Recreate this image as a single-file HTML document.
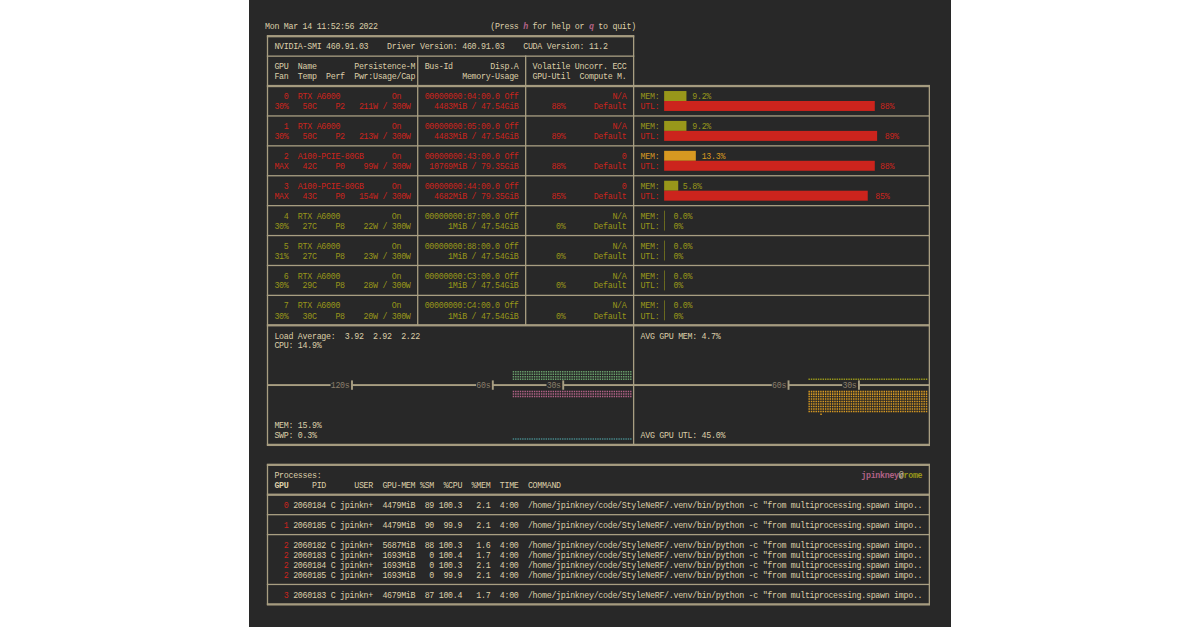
<!DOCTYPE html>
<html><head><meta charset="utf-8"><title>nvitop</title>
<style>
html,body{margin:0;padding:0;width:1200px;height:627px;overflow:hidden;background:#ffffff;}
#term{position:absolute;left:249px;top:0;width:702px;height:627px;background:#282828;}
#lines{position:absolute;left:0;top:0;width:1200px;height:627px;}
#txt{position:absolute;left:265.291px;top:22.2px;margin:0;width:1704px;
 font-family:"Liberation Mono",monospace;font-size:20.0px;line-height:21.4366px;
 color:#ddcfa8;white-space:pre;transform-origin:0 0;transform:scale(0.41464,0.46500);
 letter-spacing:-0.6792px;font-kerning:none;font-variant-ligatures:none;}
.r{color:#cc241d}.g{color:#98971a}.y{color:#d79921}.m{color:#b16286}.d{color:#8a7f6c}.c{color:#689d6a}.b{color:#458588}.B{font-weight:bold}.I{font-style:italic}</style></head>
<body>
<div id="term"></div>
<svg id="lines" width="1200" height="627" viewBox="0 0 1200 627" shape-rendering="geometricPrecision">
<rect x="266.85" y="35.05" width="367.43" height="2.30" fill="#a59b7f"/>
<rect x="266.85" y="55.49" width="367.43" height="1.30" fill="#a89e82"/>
<rect x="266.85" y="84.89" width="663.15" height="2.30" fill="#a59b7f"/>
<rect x="266.85" y="115.30" width="663.15" height="1.30" fill="#a89e82"/>
<rect x="266.85" y="145.20" width="663.15" height="1.30" fill="#a89e82"/>
<rect x="266.85" y="175.10" width="663.15" height="1.30" fill="#a89e82"/>
<rect x="266.85" y="205.01" width="663.15" height="1.30" fill="#a89e82"/>
<rect x="266.85" y="234.91" width="663.15" height="1.30" fill="#a89e82"/>
<rect x="266.85" y="264.82" width="663.15" height="1.30" fill="#a89e82"/>
<rect x="266.85" y="294.72" width="663.15" height="1.30" fill="#a89e82"/>
<rect x="266.85" y="324.12" width="663.15" height="2.30" fill="#a59b7f"/>
<rect x="266.85" y="443.74" width="663.15" height="2.30" fill="#a59b7f"/>
<rect x="266.85" y="35.55" width="1.30" height="409.99" fill="#a89e82"/>
<rect x="632.98" y="35.55" width="1.30" height="409.99" fill="#a89e82"/>
<rect x="928.70" y="85.39" width="1.30" height="360.15" fill="#a89e82"/>
<rect x="417.06" y="55.49" width="1.30" height="270.44" fill="#a89e82"/>
<rect x="525.02" y="55.49" width="1.30" height="270.44" fill="#a89e82"/>
<rect x="267.50" y="384.13" width="63.07" height="1.9" fill="#a89e82"/>
<rect x="351.99" y="384.13" width="124.09" height="1.9" fill="#a89e82"/>
<rect x="492.81" y="384.13" width="53.68" height="1.9" fill="#a89e82"/>
<rect x="563.22" y="384.13" width="70.41" height="1.9" fill="#a89e82"/>
<rect x="633.63" y="384.13" width="138.17" height="1.9" fill="#a89e82"/>
<rect x="788.53" y="384.13" width="53.68" height="1.9" fill="#a89e82"/>
<rect x="858.94" y="384.13" width="70.41" height="1.9" fill="#a89e82"/>
<rect x="351.04" y="380.40" width="1.9" height="9.37" fill="#a89e82"/>
<rect x="491.86" y="380.40" width="1.9" height="9.37" fill="#a89e82"/>
<rect x="562.27" y="380.40" width="1.9" height="9.37" fill="#a89e82"/>
<rect x="787.58" y="380.40" width="1.9" height="9.37" fill="#a89e82"/>
<rect x="857.99" y="380.40" width="1.9" height="9.37" fill="#a89e82"/>
<rect x="266.85" y="463.68" width="663.15" height="2.30" fill="#a59b7f"/>
<rect x="266.85" y="493.58" width="663.15" height="2.30" fill="#a59b7f"/>
<rect x="266.85" y="603.23" width="663.15" height="2.30" fill="#a59b7f"/>
<rect x="266.85" y="514.02" width="663.15" height="1.30" fill="#a89e82"/>
<rect x="266.85" y="533.95" width="663.15" height="1.30" fill="#a89e82"/>
<rect x="266.85" y="583.79" width="663.15" height="1.30" fill="#a89e82"/>
<rect x="266.85" y="464.18" width="1.30" height="140.85" fill="#a89e82"/>
<rect x="928.70" y="464.18" width="1.30" height="140.85" fill="#a89e82"/>
<rect x="664.14" y="91.03" width="22.30" height="9.97" fill="#98971a"/>
<rect x="664.14" y="100.99" width="210.64" height="9.97" fill="#cc241d"/>
<rect x="664.14" y="120.93" width="22.30" height="9.97" fill="#98971a"/>
<rect x="664.14" y="130.90" width="212.99" height="9.97" fill="#cc241d"/>
<rect x="664.14" y="150.83" width="31.68" height="9.97" fill="#d79921"/>
<rect x="664.14" y="160.80" width="210.64" height="9.97" fill="#cc241d"/>
<rect x="664.14" y="180.74" width="14.08" height="9.97" fill="#98971a"/>
<rect x="664.14" y="190.71" width="203.60" height="9.97" fill="#cc241d"/>
<rect x="664.14" y="210.64" width="0.59" height="9.97" fill="#98971a"/>
<rect x="664.14" y="220.61" width="0.59" height="9.97" fill="#98971a"/>
<rect x="664.14" y="240.55" width="0.59" height="9.97" fill="#98971a"/>
<rect x="664.14" y="250.51" width="0.59" height="9.97" fill="#98971a"/>
<rect x="664.14" y="270.45" width="0.59" height="9.97" fill="#98971a"/>
<rect x="664.14" y="280.42" width="0.59" height="9.97" fill="#98971a"/>
<rect x="664.14" y="300.35" width="0.59" height="9.97" fill="#98971a"/>
<rect x="664.14" y="310.32" width="0.59" height="9.97" fill="#98971a"/>
<path d="M512.73 370.93h1.45v1.5h-1.45zM512.73 373.42h1.45v1.5h-1.45zM512.73 375.91h1.45v1.5h-1.45zM512.73 378.40h1.45v1.5h-1.45zM515.08 370.93h1.45v1.5h-1.45zM515.08 373.42h1.45v1.5h-1.45zM515.08 375.91h1.45v1.5h-1.45zM515.08 378.40h1.45v1.5h-1.45zM517.43 370.93h1.45v1.5h-1.45zM517.43 373.42h1.45v1.5h-1.45zM517.43 375.91h1.45v1.5h-1.45zM517.43 378.40h1.45v1.5h-1.45zM519.77 370.93h1.45v1.5h-1.45zM519.77 373.42h1.45v1.5h-1.45zM519.77 375.91h1.45v1.5h-1.45zM519.77 378.40h1.45v1.5h-1.45zM522.12 370.93h1.45v1.5h-1.45zM522.12 373.42h1.45v1.5h-1.45zM522.12 375.91h1.45v1.5h-1.45zM522.12 378.40h1.45v1.5h-1.45zM524.47 370.93h1.45v1.5h-1.45zM524.47 373.42h1.45v1.5h-1.45zM524.47 375.91h1.45v1.5h-1.45zM524.47 378.40h1.45v1.5h-1.45zM526.82 370.93h1.45v1.5h-1.45zM526.82 373.42h1.45v1.5h-1.45zM526.82 375.91h1.45v1.5h-1.45zM526.82 378.40h1.45v1.5h-1.45zM529.16 370.93h1.45v1.5h-1.45zM529.16 373.42h1.45v1.5h-1.45zM529.16 375.91h1.45v1.5h-1.45zM529.16 378.40h1.45v1.5h-1.45zM531.51 370.93h1.45v1.5h-1.45zM531.51 373.42h1.45v1.5h-1.45zM531.51 375.91h1.45v1.5h-1.45zM531.51 378.40h1.45v1.5h-1.45zM533.86 370.93h1.45v1.5h-1.45zM533.86 373.42h1.45v1.5h-1.45zM533.86 375.91h1.45v1.5h-1.45zM533.86 378.40h1.45v1.5h-1.45zM536.20 370.93h1.45v1.5h-1.45zM536.20 373.42h1.45v1.5h-1.45zM536.20 375.91h1.45v1.5h-1.45zM536.20 378.40h1.45v1.5h-1.45zM538.55 370.93h1.45v1.5h-1.45zM538.55 373.42h1.45v1.5h-1.45zM538.55 375.91h1.45v1.5h-1.45zM538.55 378.40h1.45v1.5h-1.45zM540.90 370.93h1.45v1.5h-1.45zM540.90 373.42h1.45v1.5h-1.45zM540.90 375.91h1.45v1.5h-1.45zM540.90 378.40h1.45v1.5h-1.45zM543.24 370.93h1.45v1.5h-1.45zM543.24 373.42h1.45v1.5h-1.45zM543.24 375.91h1.45v1.5h-1.45zM543.24 378.40h1.45v1.5h-1.45zM545.59 370.93h1.45v1.5h-1.45zM545.59 373.42h1.45v1.5h-1.45zM545.59 375.91h1.45v1.5h-1.45zM545.59 378.40h1.45v1.5h-1.45zM547.94 370.93h1.45v1.5h-1.45zM547.94 373.42h1.45v1.5h-1.45zM547.94 375.91h1.45v1.5h-1.45zM547.94 378.40h1.45v1.5h-1.45zM550.29 370.93h1.45v1.5h-1.45zM550.29 373.42h1.45v1.5h-1.45zM550.29 375.91h1.45v1.5h-1.45zM550.29 378.40h1.45v1.5h-1.45zM552.63 370.93h1.45v1.5h-1.45zM552.63 373.42h1.45v1.5h-1.45zM552.63 375.91h1.45v1.5h-1.45zM552.63 378.40h1.45v1.5h-1.45zM554.98 370.93h1.45v1.5h-1.45zM554.98 373.42h1.45v1.5h-1.45zM554.98 375.91h1.45v1.5h-1.45zM554.98 378.40h1.45v1.5h-1.45zM557.33 370.93h1.45v1.5h-1.45zM557.33 373.42h1.45v1.5h-1.45zM557.33 375.91h1.45v1.5h-1.45zM557.33 378.40h1.45v1.5h-1.45zM559.67 370.93h1.45v1.5h-1.45zM559.67 373.42h1.45v1.5h-1.45zM559.67 375.91h1.45v1.5h-1.45zM559.67 378.40h1.45v1.5h-1.45zM562.02 370.93h1.45v1.5h-1.45zM562.02 373.42h1.45v1.5h-1.45zM562.02 375.91h1.45v1.5h-1.45zM562.02 378.40h1.45v1.5h-1.45zM564.37 370.93h1.45v1.5h-1.45zM564.37 373.42h1.45v1.5h-1.45zM564.37 375.91h1.45v1.5h-1.45zM564.37 378.40h1.45v1.5h-1.45zM566.71 370.93h1.45v1.5h-1.45zM566.71 373.42h1.45v1.5h-1.45zM566.71 375.91h1.45v1.5h-1.45zM566.71 378.40h1.45v1.5h-1.45zM569.06 370.93h1.45v1.5h-1.45zM569.06 373.42h1.45v1.5h-1.45zM569.06 375.91h1.45v1.5h-1.45zM569.06 378.40h1.45v1.5h-1.45zM571.41 370.93h1.45v1.5h-1.45zM571.41 373.42h1.45v1.5h-1.45zM571.41 375.91h1.45v1.5h-1.45zM571.41 378.40h1.45v1.5h-1.45zM573.76 370.93h1.45v1.5h-1.45zM573.76 373.42h1.45v1.5h-1.45zM573.76 375.91h1.45v1.5h-1.45zM573.76 378.40h1.45v1.5h-1.45zM576.10 370.93h1.45v1.5h-1.45zM576.10 373.42h1.45v1.5h-1.45zM576.10 375.91h1.45v1.5h-1.45zM576.10 378.40h1.45v1.5h-1.45zM578.45 370.93h1.45v1.5h-1.45zM578.45 373.42h1.45v1.5h-1.45zM578.45 375.91h1.45v1.5h-1.45zM578.45 378.40h1.45v1.5h-1.45zM580.80 370.93h1.45v1.5h-1.45zM580.80 373.42h1.45v1.5h-1.45zM580.80 375.91h1.45v1.5h-1.45zM580.80 378.40h1.45v1.5h-1.45zM583.14 370.93h1.45v1.5h-1.45zM583.14 373.42h1.45v1.5h-1.45zM583.14 375.91h1.45v1.5h-1.45zM583.14 378.40h1.45v1.5h-1.45zM585.49 370.93h1.45v1.5h-1.45zM585.49 373.42h1.45v1.5h-1.45zM585.49 375.91h1.45v1.5h-1.45zM585.49 378.40h1.45v1.5h-1.45zM587.84 370.93h1.45v1.5h-1.45zM587.84 373.42h1.45v1.5h-1.45zM587.84 375.91h1.45v1.5h-1.45zM587.84 378.40h1.45v1.5h-1.45zM590.18 370.93h1.45v1.5h-1.45zM590.18 373.42h1.45v1.5h-1.45zM590.18 375.91h1.45v1.5h-1.45zM590.18 378.40h1.45v1.5h-1.45zM592.53 370.93h1.45v1.5h-1.45zM592.53 373.42h1.45v1.5h-1.45zM592.53 375.91h1.45v1.5h-1.45zM592.53 378.40h1.45v1.5h-1.45zM594.88 370.93h1.45v1.5h-1.45zM594.88 373.42h1.45v1.5h-1.45zM594.88 375.91h1.45v1.5h-1.45zM594.88 378.40h1.45v1.5h-1.45zM597.23 370.93h1.45v1.5h-1.45zM597.23 373.42h1.45v1.5h-1.45zM597.23 375.91h1.45v1.5h-1.45zM597.23 378.40h1.45v1.5h-1.45zM599.57 370.93h1.45v1.5h-1.45zM599.57 373.42h1.45v1.5h-1.45zM599.57 375.91h1.45v1.5h-1.45zM599.57 378.40h1.45v1.5h-1.45zM601.92 370.93h1.45v1.5h-1.45zM601.92 373.42h1.45v1.5h-1.45zM601.92 375.91h1.45v1.5h-1.45zM601.92 378.40h1.45v1.5h-1.45zM604.27 370.93h1.45v1.5h-1.45zM604.27 373.42h1.45v1.5h-1.45zM604.27 375.91h1.45v1.5h-1.45zM604.27 378.40h1.45v1.5h-1.45zM606.61 370.93h1.45v1.5h-1.45zM606.61 373.42h1.45v1.5h-1.45zM606.61 375.91h1.45v1.5h-1.45zM606.61 378.40h1.45v1.5h-1.45zM608.96 370.93h1.45v1.5h-1.45zM608.96 373.42h1.45v1.5h-1.45zM608.96 375.91h1.45v1.5h-1.45zM608.96 378.40h1.45v1.5h-1.45zM611.31 370.93h1.45v1.5h-1.45zM611.31 373.42h1.45v1.5h-1.45zM611.31 375.91h1.45v1.5h-1.45zM611.31 378.40h1.45v1.5h-1.45zM613.65 370.93h1.45v1.5h-1.45zM613.65 373.42h1.45v1.5h-1.45zM613.65 375.91h1.45v1.5h-1.45zM613.65 378.40h1.45v1.5h-1.45zM616.00 370.93h1.45v1.5h-1.45zM616.00 373.42h1.45v1.5h-1.45zM616.00 375.91h1.45v1.5h-1.45zM616.00 378.40h1.45v1.5h-1.45zM618.35 370.93h1.45v1.5h-1.45zM618.35 373.42h1.45v1.5h-1.45zM618.35 375.91h1.45v1.5h-1.45zM618.35 378.40h1.45v1.5h-1.45zM620.70 370.93h1.45v1.5h-1.45zM620.70 373.42h1.45v1.5h-1.45zM620.70 375.91h1.45v1.5h-1.45zM620.70 378.40h1.45v1.5h-1.45zM623.04 370.93h1.45v1.5h-1.45zM623.04 373.42h1.45v1.5h-1.45zM623.04 375.91h1.45v1.5h-1.45zM623.04 378.40h1.45v1.5h-1.45zM625.39 370.93h1.45v1.5h-1.45zM625.39 373.42h1.45v1.5h-1.45zM625.39 375.91h1.45v1.5h-1.45zM625.39 378.40h1.45v1.5h-1.45zM627.74 370.93h1.45v1.5h-1.45zM627.74 373.42h1.45v1.5h-1.45zM627.74 375.91h1.45v1.5h-1.45zM627.74 378.40h1.45v1.5h-1.45zM630.08 370.93h1.45v1.5h-1.45zM630.08 373.42h1.45v1.5h-1.45zM630.08 375.91h1.45v1.5h-1.45zM630.08 378.40h1.45v1.5h-1.45z" fill="#689d6a"/>
<path d="M512.73 390.86h1.45v1.5h-1.45zM512.73 393.35h1.45v1.5h-1.45zM512.73 395.85h1.45v1.5h-1.45zM515.08 390.86h1.45v1.5h-1.45zM515.08 393.35h1.45v1.5h-1.45zM515.08 395.85h1.45v1.5h-1.45zM517.43 390.86h1.45v1.5h-1.45zM517.43 393.35h1.45v1.5h-1.45zM517.43 395.85h1.45v1.5h-1.45zM519.77 390.86h1.45v1.5h-1.45zM519.77 393.35h1.45v1.5h-1.45zM519.77 395.85h1.45v1.5h-1.45zM522.12 390.86h1.45v1.5h-1.45zM522.12 393.35h1.45v1.5h-1.45zM522.12 395.85h1.45v1.5h-1.45zM524.47 390.86h1.45v1.5h-1.45zM524.47 393.35h1.45v1.5h-1.45zM524.47 395.85h1.45v1.5h-1.45zM526.82 390.86h1.45v1.5h-1.45zM526.82 393.35h1.45v1.5h-1.45zM526.82 395.85h1.45v1.5h-1.45zM529.16 390.86h1.45v1.5h-1.45zM529.16 393.35h1.45v1.5h-1.45zM529.16 395.85h1.45v1.5h-1.45zM531.51 390.86h1.45v1.5h-1.45zM531.51 393.35h1.45v1.5h-1.45zM531.51 395.85h1.45v1.5h-1.45zM533.86 390.86h1.45v1.5h-1.45zM533.86 393.35h1.45v1.5h-1.45zM533.86 395.85h1.45v1.5h-1.45zM536.20 390.86h1.45v1.5h-1.45zM536.20 393.35h1.45v1.5h-1.45zM536.20 395.85h1.45v1.5h-1.45zM538.55 390.86h1.45v1.5h-1.45zM538.55 393.35h1.45v1.5h-1.45zM538.55 395.85h1.45v1.5h-1.45zM540.90 390.86h1.45v1.5h-1.45zM540.90 393.35h1.45v1.5h-1.45zM540.90 395.85h1.45v1.5h-1.45zM543.24 390.86h1.45v1.5h-1.45zM543.24 393.35h1.45v1.5h-1.45zM543.24 395.85h1.45v1.5h-1.45zM545.59 390.86h1.45v1.5h-1.45zM545.59 393.35h1.45v1.5h-1.45zM545.59 395.85h1.45v1.5h-1.45zM547.94 390.86h1.45v1.5h-1.45zM547.94 393.35h1.45v1.5h-1.45zM547.94 395.85h1.45v1.5h-1.45zM550.29 390.86h1.45v1.5h-1.45zM550.29 393.35h1.45v1.5h-1.45zM550.29 395.85h1.45v1.5h-1.45zM552.63 390.86h1.45v1.5h-1.45zM552.63 393.35h1.45v1.5h-1.45zM552.63 395.85h1.45v1.5h-1.45zM554.98 390.86h1.45v1.5h-1.45zM554.98 393.35h1.45v1.5h-1.45zM554.98 395.85h1.45v1.5h-1.45zM557.33 390.86h1.45v1.5h-1.45zM557.33 393.35h1.45v1.5h-1.45zM557.33 395.85h1.45v1.5h-1.45zM559.67 390.86h1.45v1.5h-1.45zM559.67 393.35h1.45v1.5h-1.45zM559.67 395.85h1.45v1.5h-1.45zM562.02 390.86h1.45v1.5h-1.45zM562.02 393.35h1.45v1.5h-1.45zM562.02 395.85h1.45v1.5h-1.45zM564.37 390.86h1.45v1.5h-1.45zM564.37 393.35h1.45v1.5h-1.45zM564.37 395.85h1.45v1.5h-1.45zM566.71 390.86h1.45v1.5h-1.45zM566.71 393.35h1.45v1.5h-1.45zM566.71 395.85h1.45v1.5h-1.45zM569.06 390.86h1.45v1.5h-1.45zM569.06 393.35h1.45v1.5h-1.45zM569.06 395.85h1.45v1.5h-1.45zM571.41 390.86h1.45v1.5h-1.45zM571.41 393.35h1.45v1.5h-1.45zM571.41 395.85h1.45v1.5h-1.45zM573.76 390.86h1.45v1.5h-1.45zM573.76 393.35h1.45v1.5h-1.45zM573.76 395.85h1.45v1.5h-1.45zM576.10 390.86h1.45v1.5h-1.45zM576.10 393.35h1.45v1.5h-1.45zM576.10 395.85h1.45v1.5h-1.45zM578.45 390.86h1.45v1.5h-1.45zM578.45 393.35h1.45v1.5h-1.45zM578.45 395.85h1.45v1.5h-1.45zM580.80 390.86h1.45v1.5h-1.45zM580.80 393.35h1.45v1.5h-1.45zM580.80 395.85h1.45v1.5h-1.45zM583.14 390.86h1.45v1.5h-1.45zM583.14 393.35h1.45v1.5h-1.45zM583.14 395.85h1.45v1.5h-1.45zM585.49 390.86h1.45v1.5h-1.45zM585.49 393.35h1.45v1.5h-1.45zM585.49 395.85h1.45v1.5h-1.45zM587.84 390.86h1.45v1.5h-1.45zM587.84 393.35h1.45v1.5h-1.45zM587.84 395.85h1.45v1.5h-1.45zM590.18 390.86h1.45v1.5h-1.45zM590.18 393.35h1.45v1.5h-1.45zM590.18 395.85h1.45v1.5h-1.45zM592.53 390.86h1.45v1.5h-1.45zM592.53 393.35h1.45v1.5h-1.45zM592.53 395.85h1.45v1.5h-1.45zM594.88 390.86h1.45v1.5h-1.45zM594.88 393.35h1.45v1.5h-1.45zM594.88 395.85h1.45v1.5h-1.45zM597.23 390.86h1.45v1.5h-1.45zM597.23 393.35h1.45v1.5h-1.45zM597.23 395.85h1.45v1.5h-1.45zM599.57 390.86h1.45v1.5h-1.45zM599.57 393.35h1.45v1.5h-1.45zM599.57 395.85h1.45v1.5h-1.45zM601.92 390.86h1.45v1.5h-1.45zM601.92 393.35h1.45v1.5h-1.45zM601.92 395.85h1.45v1.5h-1.45zM604.27 390.86h1.45v1.5h-1.45zM604.27 393.35h1.45v1.5h-1.45zM604.27 395.85h1.45v1.5h-1.45zM606.61 390.86h1.45v1.5h-1.45zM606.61 393.35h1.45v1.5h-1.45zM606.61 395.85h1.45v1.5h-1.45zM608.96 390.86h1.45v1.5h-1.45zM608.96 393.35h1.45v1.5h-1.45zM608.96 395.85h1.45v1.5h-1.45zM611.31 390.86h1.45v1.5h-1.45zM611.31 393.35h1.45v1.5h-1.45zM611.31 395.85h1.45v1.5h-1.45zM613.65 390.86h1.45v1.5h-1.45zM613.65 393.35h1.45v1.5h-1.45zM613.65 395.85h1.45v1.5h-1.45zM616.00 390.86h1.45v1.5h-1.45zM616.00 393.35h1.45v1.5h-1.45zM616.00 395.85h1.45v1.5h-1.45zM618.35 390.86h1.45v1.5h-1.45zM618.35 393.35h1.45v1.5h-1.45zM618.35 395.85h1.45v1.5h-1.45zM620.70 390.86h1.45v1.5h-1.45zM620.70 393.35h1.45v1.5h-1.45zM620.70 395.85h1.45v1.5h-1.45zM623.04 390.86h1.45v1.5h-1.45zM623.04 393.35h1.45v1.5h-1.45zM623.04 395.85h1.45v1.5h-1.45zM625.39 390.86h1.45v1.5h-1.45zM625.39 393.35h1.45v1.5h-1.45zM625.39 395.85h1.45v1.5h-1.45zM627.74 390.86h1.45v1.5h-1.45zM627.74 393.35h1.45v1.5h-1.45zM627.74 395.85h1.45v1.5h-1.45zM630.08 390.86h1.45v1.5h-1.45zM630.08 393.35h1.45v1.5h-1.45zM630.08 395.85h1.45v1.5h-1.45z" fill="#b16286"/>
<path d="M512.73 438.21h1.45v1.5h-1.45zM515.08 438.21h1.45v1.5h-1.45zM517.43 438.21h1.45v1.5h-1.45zM519.77 438.21h1.45v1.5h-1.45zM522.12 438.21h1.45v1.5h-1.45zM524.47 438.21h1.45v1.5h-1.45zM526.82 438.21h1.45v1.5h-1.45zM529.16 438.21h1.45v1.5h-1.45zM531.51 438.21h1.45v1.5h-1.45zM533.86 438.21h1.45v1.5h-1.45zM536.20 438.21h1.45v1.5h-1.45zM538.55 438.21h1.45v1.5h-1.45zM540.90 438.21h1.45v1.5h-1.45zM543.24 438.21h1.45v1.5h-1.45zM545.59 438.21h1.45v1.5h-1.45zM547.94 438.21h1.45v1.5h-1.45zM550.29 438.21h1.45v1.5h-1.45zM552.63 438.21h1.45v1.5h-1.45zM554.98 438.21h1.45v1.5h-1.45zM557.33 438.21h1.45v1.5h-1.45zM559.67 438.21h1.45v1.5h-1.45zM562.02 438.21h1.45v1.5h-1.45zM564.37 438.21h1.45v1.5h-1.45zM566.71 438.21h1.45v1.5h-1.45zM569.06 438.21h1.45v1.5h-1.45zM571.41 438.21h1.45v1.5h-1.45zM573.76 438.21h1.45v1.5h-1.45zM576.10 438.21h1.45v1.5h-1.45zM578.45 438.21h1.45v1.5h-1.45zM580.80 438.21h1.45v1.5h-1.45zM583.14 438.21h1.45v1.5h-1.45zM585.49 438.21h1.45v1.5h-1.45zM587.84 438.21h1.45v1.5h-1.45zM590.18 438.21h1.45v1.5h-1.45zM592.53 438.21h1.45v1.5h-1.45zM594.88 438.21h1.45v1.5h-1.45zM597.23 438.21h1.45v1.5h-1.45zM599.57 438.21h1.45v1.5h-1.45zM601.92 438.21h1.45v1.5h-1.45zM604.27 438.21h1.45v1.5h-1.45zM606.61 438.21h1.45v1.5h-1.45zM608.96 438.21h1.45v1.5h-1.45zM611.31 438.21h1.45v1.5h-1.45zM613.65 438.21h1.45v1.5h-1.45zM616.00 438.21h1.45v1.5h-1.45zM618.35 438.21h1.45v1.5h-1.45zM620.70 438.21h1.45v1.5h-1.45zM623.04 438.21h1.45v1.5h-1.45zM625.39 438.21h1.45v1.5h-1.45zM627.74 438.21h1.45v1.5h-1.45zM630.08 438.21h1.45v1.5h-1.45z" fill="#458588"/>
<path d="M808.46 378.40h1.45v1.5h-1.45zM810.80 378.40h1.45v1.5h-1.45zM813.15 378.40h1.45v1.5h-1.45zM815.50 378.40h1.45v1.5h-1.45zM817.84 378.40h1.45v1.5h-1.45zM820.19 378.40h1.45v1.5h-1.45zM822.54 378.40h1.45v1.5h-1.45zM824.88 378.40h1.45v1.5h-1.45zM827.23 378.40h1.45v1.5h-1.45zM829.58 378.40h1.45v1.5h-1.45zM831.93 378.40h1.45v1.5h-1.45zM834.27 378.40h1.45v1.5h-1.45zM836.62 378.40h1.45v1.5h-1.45zM838.97 378.40h1.45v1.5h-1.45zM841.31 378.40h1.45v1.5h-1.45zM843.66 378.40h1.45v1.5h-1.45zM846.01 378.40h1.45v1.5h-1.45zM848.35 378.40h1.45v1.5h-1.45zM850.70 378.40h1.45v1.5h-1.45zM853.05 378.40h1.45v1.5h-1.45zM855.40 378.40h1.45v1.5h-1.45zM857.74 378.40h1.45v1.5h-1.45zM860.09 378.40h1.45v1.5h-1.45zM862.44 378.40h1.45v1.5h-1.45zM864.78 378.40h1.45v1.5h-1.45zM867.13 378.40h1.45v1.5h-1.45zM869.48 378.40h1.45v1.5h-1.45zM871.82 378.40h1.45v1.5h-1.45zM874.17 378.40h1.45v1.5h-1.45zM876.52 378.40h1.45v1.5h-1.45zM878.87 378.40h1.45v1.5h-1.45zM881.21 378.40h1.45v1.5h-1.45zM883.56 378.40h1.45v1.5h-1.45zM885.91 378.40h1.45v1.5h-1.45zM888.25 378.40h1.45v1.5h-1.45zM890.60 378.40h1.45v1.5h-1.45zM892.95 378.40h1.45v1.5h-1.45zM895.29 378.40h1.45v1.5h-1.45zM897.64 378.40h1.45v1.5h-1.45zM899.99 378.40h1.45v1.5h-1.45zM902.34 378.40h1.45v1.5h-1.45zM904.68 378.40h1.45v1.5h-1.45zM907.03 378.40h1.45v1.5h-1.45zM909.38 378.40h1.45v1.5h-1.45zM911.72 378.40h1.45v1.5h-1.45zM914.07 378.40h1.45v1.5h-1.45zM916.42 378.40h1.45v1.5h-1.45zM918.76 378.40h1.45v1.5h-1.45zM921.11 378.40h1.45v1.5h-1.45zM923.46 378.40h1.45v1.5h-1.45zM925.81 378.40h1.45v1.5h-1.45z" fill="#98971a"/>
<path d="M808.46 390.84h1.45v1.55h-1.45zM808.46 393.33h1.45v1.55h-1.45zM808.46 395.82h1.45v1.55h-1.45zM808.46 398.31h1.45v1.55h-1.45zM810.80 390.84h1.45v1.55h-1.45zM810.80 393.33h1.45v1.55h-1.45zM810.80 395.82h1.45v1.55h-1.45zM810.80 398.31h1.45v1.55h-1.45zM813.15 390.84h1.45v1.55h-1.45zM813.15 393.33h1.45v1.55h-1.45zM813.15 395.82h1.45v1.55h-1.45zM813.15 398.31h1.45v1.55h-1.45zM815.50 390.84h1.45v1.55h-1.45zM815.50 393.33h1.45v1.55h-1.45zM815.50 395.82h1.45v1.55h-1.45zM815.50 398.31h1.45v1.55h-1.45zM817.84 390.84h1.45v1.55h-1.45zM817.84 393.33h1.45v1.55h-1.45zM817.84 395.82h1.45v1.55h-1.45zM817.84 398.31h1.45v1.55h-1.45zM820.19 390.84h1.45v1.55h-1.45zM820.19 393.33h1.45v1.55h-1.45zM820.19 395.82h1.45v1.55h-1.45zM820.19 398.31h1.45v1.55h-1.45zM822.54 390.84h1.45v1.55h-1.45zM822.54 393.33h1.45v1.55h-1.45zM822.54 395.82h1.45v1.55h-1.45zM822.54 398.31h1.45v1.55h-1.45zM824.88 390.84h1.45v1.55h-1.45zM824.88 393.33h1.45v1.55h-1.45zM824.88 395.82h1.45v1.55h-1.45zM824.88 398.31h1.45v1.55h-1.45zM827.23 390.84h1.45v1.55h-1.45zM827.23 393.33h1.45v1.55h-1.45zM827.23 395.82h1.45v1.55h-1.45zM827.23 398.31h1.45v1.55h-1.45zM829.58 390.84h1.45v1.55h-1.45zM829.58 393.33h1.45v1.55h-1.45zM829.58 395.82h1.45v1.55h-1.45zM829.58 398.31h1.45v1.55h-1.45zM831.93 390.84h1.45v1.55h-1.45zM831.93 393.33h1.45v1.55h-1.45zM831.93 395.82h1.45v1.55h-1.45zM831.93 398.31h1.45v1.55h-1.45zM834.27 390.84h1.45v1.55h-1.45zM834.27 393.33h1.45v1.55h-1.45zM834.27 395.82h1.45v1.55h-1.45zM834.27 398.31h1.45v1.55h-1.45zM836.62 390.84h1.45v1.55h-1.45zM836.62 393.33h1.45v1.55h-1.45zM836.62 395.82h1.45v1.55h-1.45zM836.62 398.31h1.45v1.55h-1.45zM838.97 390.84h1.45v1.55h-1.45zM838.97 393.33h1.45v1.55h-1.45zM838.97 395.82h1.45v1.55h-1.45zM838.97 398.31h1.45v1.55h-1.45zM841.31 390.84h1.45v1.55h-1.45zM841.31 393.33h1.45v1.55h-1.45zM841.31 395.82h1.45v1.55h-1.45zM841.31 398.31h1.45v1.55h-1.45zM843.66 390.84h1.45v1.55h-1.45zM843.66 393.33h1.45v1.55h-1.45zM843.66 395.82h1.45v1.55h-1.45zM843.66 398.31h1.45v1.55h-1.45zM846.01 390.84h1.45v1.55h-1.45zM846.01 393.33h1.45v1.55h-1.45zM846.01 395.82h1.45v1.55h-1.45zM846.01 398.31h1.45v1.55h-1.45zM848.35 390.84h1.45v1.55h-1.45zM848.35 393.33h1.45v1.55h-1.45zM848.35 395.82h1.45v1.55h-1.45zM848.35 398.31h1.45v1.55h-1.45zM850.70 390.84h1.45v1.55h-1.45zM850.70 393.33h1.45v1.55h-1.45zM850.70 395.82h1.45v1.55h-1.45zM850.70 398.31h1.45v1.55h-1.45zM853.05 390.84h1.45v1.55h-1.45zM853.05 393.33h1.45v1.55h-1.45zM853.05 395.82h1.45v1.55h-1.45zM853.05 398.31h1.45v1.55h-1.45zM855.40 390.84h1.45v1.55h-1.45zM855.40 393.33h1.45v1.55h-1.45zM855.40 395.82h1.45v1.55h-1.45zM855.40 398.31h1.45v1.55h-1.45zM857.74 390.84h1.45v1.55h-1.45zM857.74 393.33h1.45v1.55h-1.45zM857.74 395.82h1.45v1.55h-1.45zM857.74 398.31h1.45v1.55h-1.45zM860.09 390.84h1.45v1.55h-1.45zM860.09 393.33h1.45v1.55h-1.45zM860.09 395.82h1.45v1.55h-1.45zM860.09 398.31h1.45v1.55h-1.45zM862.44 390.84h1.45v1.55h-1.45zM862.44 393.33h1.45v1.55h-1.45zM862.44 395.82h1.45v1.55h-1.45zM862.44 398.31h1.45v1.55h-1.45zM864.78 390.84h1.45v1.55h-1.45zM864.78 393.33h1.45v1.55h-1.45zM864.78 395.82h1.45v1.55h-1.45zM864.78 398.31h1.45v1.55h-1.45zM867.13 390.84h1.45v1.55h-1.45zM867.13 393.33h1.45v1.55h-1.45zM867.13 395.82h1.45v1.55h-1.45zM867.13 398.31h1.45v1.55h-1.45zM869.48 390.84h1.45v1.55h-1.45zM869.48 393.33h1.45v1.55h-1.45zM869.48 395.82h1.45v1.55h-1.45zM869.48 398.31h1.45v1.55h-1.45zM871.82 390.84h1.45v1.55h-1.45zM871.82 393.33h1.45v1.55h-1.45zM871.82 395.82h1.45v1.55h-1.45zM871.82 398.31h1.45v1.55h-1.45zM874.17 390.84h1.45v1.55h-1.45zM874.17 393.33h1.45v1.55h-1.45zM874.17 395.82h1.45v1.55h-1.45zM874.17 398.31h1.45v1.55h-1.45zM876.52 390.84h1.45v1.55h-1.45zM876.52 393.33h1.45v1.55h-1.45zM876.52 395.82h1.45v1.55h-1.45zM876.52 398.31h1.45v1.55h-1.45zM878.87 390.84h1.45v1.55h-1.45zM878.87 393.33h1.45v1.55h-1.45zM878.87 395.82h1.45v1.55h-1.45zM878.87 398.31h1.45v1.55h-1.45zM881.21 390.84h1.45v1.55h-1.45zM881.21 393.33h1.45v1.55h-1.45zM881.21 395.82h1.45v1.55h-1.45zM881.21 398.31h1.45v1.55h-1.45zM883.56 390.84h1.45v1.55h-1.45zM883.56 393.33h1.45v1.55h-1.45zM883.56 395.82h1.45v1.55h-1.45zM883.56 398.31h1.45v1.55h-1.45zM885.91 390.84h1.45v1.55h-1.45zM885.91 393.33h1.45v1.55h-1.45zM885.91 395.82h1.45v1.55h-1.45zM885.91 398.31h1.45v1.55h-1.45zM888.25 390.84h1.45v1.55h-1.45zM888.25 393.33h1.45v1.55h-1.45zM888.25 395.82h1.45v1.55h-1.45zM888.25 398.31h1.45v1.55h-1.45zM890.60 390.84h1.45v1.55h-1.45zM890.60 393.33h1.45v1.55h-1.45zM890.60 395.82h1.45v1.55h-1.45zM890.60 398.31h1.45v1.55h-1.45zM892.95 390.84h1.45v1.55h-1.45zM892.95 393.33h1.45v1.55h-1.45zM892.95 395.82h1.45v1.55h-1.45zM892.95 398.31h1.45v1.55h-1.45zM895.29 390.84h1.45v1.55h-1.45zM895.29 393.33h1.45v1.55h-1.45zM895.29 395.82h1.45v1.55h-1.45zM895.29 398.31h1.45v1.55h-1.45zM897.64 390.84h1.45v1.55h-1.45zM897.64 393.33h1.45v1.55h-1.45zM897.64 395.82h1.45v1.55h-1.45zM897.64 398.31h1.45v1.55h-1.45zM899.99 390.84h1.45v1.55h-1.45zM899.99 393.33h1.45v1.55h-1.45zM899.99 395.82h1.45v1.55h-1.45zM899.99 398.31h1.45v1.55h-1.45zM902.34 390.84h1.45v1.55h-1.45zM902.34 393.33h1.45v1.55h-1.45zM902.34 395.82h1.45v1.55h-1.45zM902.34 398.31h1.45v1.55h-1.45zM904.68 390.84h1.45v1.55h-1.45zM904.68 393.33h1.45v1.55h-1.45zM904.68 395.82h1.45v1.55h-1.45zM904.68 398.31h1.45v1.55h-1.45zM907.03 390.84h1.45v1.55h-1.45zM907.03 393.33h1.45v1.55h-1.45zM907.03 395.82h1.45v1.55h-1.45zM907.03 398.31h1.45v1.55h-1.45zM909.38 390.84h1.45v1.55h-1.45zM909.38 393.33h1.45v1.55h-1.45zM909.38 395.82h1.45v1.55h-1.45zM909.38 398.31h1.45v1.55h-1.45zM911.72 390.84h1.45v1.55h-1.45zM911.72 393.33h1.45v1.55h-1.45zM911.72 395.82h1.45v1.55h-1.45zM911.72 398.31h1.45v1.55h-1.45zM914.07 390.84h1.45v1.55h-1.45zM914.07 393.33h1.45v1.55h-1.45zM914.07 395.82h1.45v1.55h-1.45zM914.07 398.31h1.45v1.55h-1.45zM916.42 390.84h1.45v1.55h-1.45zM916.42 393.33h1.45v1.55h-1.45zM916.42 395.82h1.45v1.55h-1.45zM916.42 398.31h1.45v1.55h-1.45zM918.76 390.84h1.45v1.55h-1.45zM918.76 393.33h1.45v1.55h-1.45zM918.76 395.82h1.45v1.55h-1.45zM918.76 398.31h1.45v1.55h-1.45zM921.11 390.84h1.45v1.55h-1.45zM921.11 393.33h1.45v1.55h-1.45zM921.11 395.82h1.45v1.55h-1.45zM921.11 398.31h1.45v1.55h-1.45zM923.46 390.84h1.45v1.55h-1.45zM923.46 393.33h1.45v1.55h-1.45zM923.46 395.82h1.45v1.55h-1.45zM923.46 398.31h1.45v1.55h-1.45zM925.81 390.84h1.45v1.55h-1.45zM925.81 393.33h1.45v1.55h-1.45zM925.81 395.82h1.45v1.55h-1.45zM925.81 398.31h1.45v1.55h-1.45z" fill="#d79921"/>
<path d="M808.46 400.81h1.45v1.55h-1.45zM808.46 403.30h1.45v1.55h-1.45zM808.46 405.79h1.45v1.55h-1.45zM808.46 408.28h1.45v1.55h-1.45zM810.80 400.81h1.45v1.55h-1.45zM810.80 403.30h1.45v1.55h-1.45zM810.80 405.79h1.45v1.55h-1.45zM810.80 408.28h1.45v1.55h-1.45zM813.15 400.81h1.45v1.55h-1.45zM813.15 403.30h1.45v1.55h-1.45zM813.15 405.79h1.45v1.55h-1.45zM813.15 408.28h1.45v1.55h-1.45zM815.50 400.81h1.45v1.55h-1.45zM815.50 403.30h1.45v1.55h-1.45zM815.50 405.79h1.45v1.55h-1.45zM815.50 408.28h1.45v1.55h-1.45zM817.84 400.81h1.45v1.55h-1.45zM817.84 403.30h1.45v1.55h-1.45zM817.84 405.79h1.45v1.55h-1.45zM817.84 408.28h1.45v1.55h-1.45zM820.19 400.81h1.45v1.55h-1.45zM820.19 403.30h1.45v1.55h-1.45zM820.19 405.79h1.45v1.55h-1.45zM820.19 408.28h1.45v1.55h-1.45zM822.54 400.81h1.45v1.55h-1.45zM822.54 403.30h1.45v1.55h-1.45zM822.54 405.79h1.45v1.55h-1.45zM822.54 408.28h1.45v1.55h-1.45zM824.88 400.81h1.45v1.55h-1.45zM824.88 403.30h1.45v1.55h-1.45zM824.88 405.79h1.45v1.55h-1.45zM824.88 408.28h1.45v1.55h-1.45zM827.23 400.81h1.45v1.55h-1.45zM827.23 403.30h1.45v1.55h-1.45zM827.23 405.79h1.45v1.55h-1.45zM827.23 408.28h1.45v1.55h-1.45zM829.58 400.81h1.45v1.55h-1.45zM829.58 403.30h1.45v1.55h-1.45zM829.58 405.79h1.45v1.55h-1.45zM829.58 408.28h1.45v1.55h-1.45zM831.93 400.81h1.45v1.55h-1.45zM831.93 403.30h1.45v1.55h-1.45zM831.93 405.79h1.45v1.55h-1.45zM831.93 408.28h1.45v1.55h-1.45zM834.27 400.81h1.45v1.55h-1.45zM834.27 403.30h1.45v1.55h-1.45zM834.27 405.79h1.45v1.55h-1.45zM834.27 408.28h1.45v1.55h-1.45zM836.62 400.81h1.45v1.55h-1.45zM836.62 403.30h1.45v1.55h-1.45zM836.62 405.79h1.45v1.55h-1.45zM836.62 408.28h1.45v1.55h-1.45zM838.97 400.81h1.45v1.55h-1.45zM838.97 403.30h1.45v1.55h-1.45zM838.97 405.79h1.45v1.55h-1.45zM838.97 408.28h1.45v1.55h-1.45zM841.31 400.81h1.45v1.55h-1.45zM841.31 403.30h1.45v1.55h-1.45zM841.31 405.79h1.45v1.55h-1.45zM841.31 408.28h1.45v1.55h-1.45zM843.66 400.81h1.45v1.55h-1.45zM843.66 403.30h1.45v1.55h-1.45zM843.66 405.79h1.45v1.55h-1.45zM843.66 408.28h1.45v1.55h-1.45zM846.01 400.81h1.45v1.55h-1.45zM846.01 403.30h1.45v1.55h-1.45zM846.01 405.79h1.45v1.55h-1.45zM846.01 408.28h1.45v1.55h-1.45zM848.35 400.81h1.45v1.55h-1.45zM848.35 403.30h1.45v1.55h-1.45zM848.35 405.79h1.45v1.55h-1.45zM848.35 408.28h1.45v1.55h-1.45zM850.70 400.81h1.45v1.55h-1.45zM850.70 403.30h1.45v1.55h-1.45zM850.70 405.79h1.45v1.55h-1.45zM850.70 408.28h1.45v1.55h-1.45zM853.05 400.81h1.45v1.55h-1.45zM853.05 403.30h1.45v1.55h-1.45zM853.05 405.79h1.45v1.55h-1.45zM853.05 408.28h1.45v1.55h-1.45zM855.40 400.81h1.45v1.55h-1.45zM855.40 403.30h1.45v1.55h-1.45zM855.40 405.79h1.45v1.55h-1.45zM855.40 408.28h1.45v1.55h-1.45zM857.74 400.81h1.45v1.55h-1.45zM857.74 403.30h1.45v1.55h-1.45zM857.74 405.79h1.45v1.55h-1.45zM857.74 408.28h1.45v1.55h-1.45zM860.09 400.81h1.45v1.55h-1.45zM860.09 403.30h1.45v1.55h-1.45zM860.09 405.79h1.45v1.55h-1.45zM860.09 408.28h1.45v1.55h-1.45zM862.44 400.81h1.45v1.55h-1.45zM862.44 403.30h1.45v1.55h-1.45zM862.44 405.79h1.45v1.55h-1.45zM862.44 408.28h1.45v1.55h-1.45zM864.78 400.81h1.45v1.55h-1.45zM864.78 403.30h1.45v1.55h-1.45zM864.78 405.79h1.45v1.55h-1.45zM864.78 408.28h1.45v1.55h-1.45zM867.13 400.81h1.45v1.55h-1.45zM867.13 403.30h1.45v1.55h-1.45zM867.13 405.79h1.45v1.55h-1.45zM867.13 408.28h1.45v1.55h-1.45zM869.48 400.81h1.45v1.55h-1.45zM869.48 403.30h1.45v1.55h-1.45zM869.48 405.79h1.45v1.55h-1.45zM869.48 408.28h1.45v1.55h-1.45zM871.82 400.81h1.45v1.55h-1.45zM871.82 403.30h1.45v1.55h-1.45zM871.82 405.79h1.45v1.55h-1.45zM871.82 408.28h1.45v1.55h-1.45zM874.17 400.81h1.45v1.55h-1.45zM874.17 403.30h1.45v1.55h-1.45zM874.17 405.79h1.45v1.55h-1.45zM874.17 408.28h1.45v1.55h-1.45zM876.52 400.81h1.45v1.55h-1.45zM876.52 403.30h1.45v1.55h-1.45zM876.52 405.79h1.45v1.55h-1.45zM876.52 408.28h1.45v1.55h-1.45zM878.87 400.81h1.45v1.55h-1.45zM878.87 403.30h1.45v1.55h-1.45zM878.87 405.79h1.45v1.55h-1.45zM878.87 408.28h1.45v1.55h-1.45zM881.21 400.81h1.45v1.55h-1.45zM881.21 403.30h1.45v1.55h-1.45zM881.21 405.79h1.45v1.55h-1.45zM881.21 408.28h1.45v1.55h-1.45zM883.56 400.81h1.45v1.55h-1.45zM883.56 403.30h1.45v1.55h-1.45zM883.56 405.79h1.45v1.55h-1.45zM883.56 408.28h1.45v1.55h-1.45zM885.91 400.81h1.45v1.55h-1.45zM885.91 403.30h1.45v1.55h-1.45zM885.91 405.79h1.45v1.55h-1.45zM885.91 408.28h1.45v1.55h-1.45zM888.25 400.81h1.45v1.55h-1.45zM888.25 403.30h1.45v1.55h-1.45zM888.25 405.79h1.45v1.55h-1.45zM888.25 408.28h1.45v1.55h-1.45zM890.60 400.81h1.45v1.55h-1.45zM890.60 403.30h1.45v1.55h-1.45zM890.60 405.79h1.45v1.55h-1.45zM890.60 408.28h1.45v1.55h-1.45zM892.95 400.81h1.45v1.55h-1.45zM892.95 403.30h1.45v1.55h-1.45zM892.95 405.79h1.45v1.55h-1.45zM892.95 408.28h1.45v1.55h-1.45zM895.29 400.81h1.45v1.55h-1.45zM895.29 403.30h1.45v1.55h-1.45zM895.29 405.79h1.45v1.55h-1.45zM895.29 408.28h1.45v1.55h-1.45zM897.64 400.81h1.45v1.55h-1.45zM897.64 403.30h1.45v1.55h-1.45zM897.64 405.79h1.45v1.55h-1.45zM897.64 408.28h1.45v1.55h-1.45zM899.99 400.81h1.45v1.55h-1.45zM899.99 403.30h1.45v1.55h-1.45zM899.99 405.79h1.45v1.55h-1.45zM899.99 408.28h1.45v1.55h-1.45zM902.34 400.81h1.45v1.55h-1.45zM902.34 403.30h1.45v1.55h-1.45zM902.34 405.79h1.45v1.55h-1.45zM902.34 408.28h1.45v1.55h-1.45zM904.68 400.81h1.45v1.55h-1.45zM904.68 403.30h1.45v1.55h-1.45zM904.68 405.79h1.45v1.55h-1.45zM904.68 408.28h1.45v1.55h-1.45zM907.03 400.81h1.45v1.55h-1.45zM907.03 403.30h1.45v1.55h-1.45zM907.03 405.79h1.45v1.55h-1.45zM907.03 408.28h1.45v1.55h-1.45zM909.38 400.81h1.45v1.55h-1.45zM909.38 403.30h1.45v1.55h-1.45zM909.38 405.79h1.45v1.55h-1.45zM909.38 408.28h1.45v1.55h-1.45zM911.72 400.81h1.45v1.55h-1.45zM911.72 403.30h1.45v1.55h-1.45zM911.72 405.79h1.45v1.55h-1.45zM911.72 408.28h1.45v1.55h-1.45zM914.07 400.81h1.45v1.55h-1.45zM914.07 403.30h1.45v1.55h-1.45zM914.07 405.79h1.45v1.55h-1.45zM914.07 408.28h1.45v1.55h-1.45zM916.42 400.81h1.45v1.55h-1.45zM916.42 403.30h1.45v1.55h-1.45zM916.42 405.79h1.45v1.55h-1.45zM916.42 408.28h1.45v1.55h-1.45zM918.76 400.81h1.45v1.55h-1.45zM918.76 403.30h1.45v1.55h-1.45zM918.76 405.79h1.45v1.55h-1.45zM918.76 408.28h1.45v1.55h-1.45zM921.11 400.81h1.45v1.55h-1.45zM921.11 403.30h1.45v1.55h-1.45zM921.11 405.79h1.45v1.55h-1.45zM921.11 408.28h1.45v1.55h-1.45zM923.46 400.81h1.45v1.55h-1.45zM923.46 403.30h1.45v1.55h-1.45zM923.46 405.79h1.45v1.55h-1.45zM923.46 408.28h1.45v1.55h-1.45zM925.81 400.81h1.45v1.55h-1.45zM925.81 403.30h1.45v1.55h-1.45zM925.81 405.79h1.45v1.55h-1.45zM925.81 408.28h1.45v1.55h-1.45z" fill="#d79921"/>
<path d="M808.46 410.77h1.45v1.55h-1.45zM810.80 410.77h1.45v1.55h-1.45zM813.15 410.77h1.45v1.55h-1.45zM815.50 410.77h1.45v1.55h-1.45zM817.84 410.77h1.45v1.55h-1.45zM820.19 410.77h1.45v1.55h-1.45zM822.54 410.77h1.45v1.55h-1.45zM824.88 410.77h1.45v1.55h-1.45zM827.23 410.77h1.45v1.55h-1.45zM829.58 410.77h1.45v1.55h-1.45zM831.93 410.77h1.45v1.55h-1.45zM834.27 410.77h1.45v1.55h-1.45zM836.62 410.77h1.45v1.55h-1.45zM838.97 410.77h1.45v1.55h-1.45zM841.31 410.77h1.45v1.55h-1.45zM843.66 410.77h1.45v1.55h-1.45zM846.01 410.77h1.45v1.55h-1.45zM848.35 410.77h1.45v1.55h-1.45zM850.70 410.77h1.45v1.55h-1.45zM853.05 410.77h1.45v1.55h-1.45zM855.40 410.77h1.45v1.55h-1.45zM857.74 410.77h1.45v1.55h-1.45zM860.09 410.77h1.45v1.55h-1.45zM862.44 410.77h1.45v1.55h-1.45zM864.78 410.77h1.45v1.55h-1.45zM867.13 410.77h1.45v1.55h-1.45zM869.48 410.77h1.45v1.55h-1.45zM871.82 410.77h1.45v1.55h-1.45zM874.17 410.77h1.45v1.55h-1.45zM876.52 410.77h1.45v1.55h-1.45zM878.87 410.77h1.45v1.55h-1.45zM881.21 410.77h1.45v1.55h-1.45zM883.56 410.77h1.45v1.55h-1.45zM885.91 410.77h1.45v1.55h-1.45zM888.25 410.77h1.45v1.55h-1.45zM890.60 410.77h1.45v1.55h-1.45zM892.95 410.77h1.45v1.55h-1.45zM895.29 410.77h1.45v1.55h-1.45zM897.64 410.77h1.45v1.55h-1.45zM899.99 410.77h1.45v1.55h-1.45zM902.34 410.77h1.45v1.55h-1.45zM904.68 410.77h1.45v1.55h-1.45zM907.03 410.77h1.45v1.55h-1.45zM909.38 410.77h1.45v1.55h-1.45zM911.72 410.77h1.45v1.55h-1.45zM914.07 410.77h1.45v1.55h-1.45zM916.42 410.77h1.45v1.55h-1.45zM918.76 410.77h1.45v1.55h-1.45zM921.11 410.77h1.45v1.55h-1.45zM923.46 410.77h1.45v1.55h-1.45zM925.81 410.77h1.45v1.55h-1.45z" fill="#d79921"/>
<rect x="820.3" y="413.5" width="1.5" height="1.5" fill="#d79921"/>
</svg>
<pre id="txt">Mon Mar 14 11:52:56 2022                        (Press <span class="m B I">h </span>for help or <span class="m B I">q </span>to quit)

  NVIDIA-SMI 460.91.03    Driver Version: 460.91.03    CUDA Version: 11.2

  GPU  Name        Persistence-M  Bus-Id        Disp.A   Volatile Uncorr. ECC
  Fan  Temp  Perf  Pwr:Usage/Cap          Memory-Usage   GPU-Util  Compute M.

    <span class="r">0  RTX A6000           On     00000000:04:00.0 Off                    N/A   </span><span class="g">MEM:       9.2%</span>
  <span class="r">30%   50C    P2   211W / 300W     4483MiB / 47.54GiB       88%      Default   UTL:                                               88%</span>

    <span class="r">1  RTX A6000           On     00000000:05:00.0 Off                    N/A   </span><span class="g">MEM:       9.2%</span>
  <span class="r">30%   50C    P2   213W / 300W     4483MiB / 47.54GiB       89%      Default   UTL:                                                89%</span>

    <span class="r">2  A100-PCIE-80GB      On     00000000:43:00.0 Off                      0   </span><span class="y">MEM:         13.3%</span>
  <span class="r">MAX   42C    P0    99W / 300W    10769MiB / 79.35GiB       88%      Default   UTL:                                               88%</span>

    <span class="r">3  A100-PCIE-80GB      On     00000000:44:00.0 Off                      0   </span><span class="g">MEM:     5.8%</span>
  <span class="r">MAX   43C    P0   154W / 300W     4682MiB / 79.35GiB       85%      Default   UTL:                                              85%</span>

    <span class="g">4  RTX A6000           On     00000000:87:00.0 Off                    N/A   MEM:   0.0%</span>
  <span class="g">30%   27C    P8    22W / 300W        1MiB / 47.54GiB        0%      Default   UTL:   0%</span>

    <span class="g">5  RTX A6000           On     00000000:88:00.0 Off                    N/A   MEM:   0.0%</span>
  <span class="g">31%   27C    P8    23W / 300W        1MiB / 47.54GiB        0%      Default   UTL:   0%</span>

    <span class="g">6  RTX A6000           On     00000000:C3:00.0 Off                    N/A   MEM:   0.0%</span>
  <span class="g">30%   29C    P8    28W / 300W        1MiB / 47.54GiB        0%      Default   UTL:   0%</span>

    <span class="g">7  RTX A6000           On     00000000:C4:00.0 Off                    N/A   MEM:   0.0%</span>
  <span class="g">30%   30C    P8    20W / 300W        1MiB / 47.54GiB        0%      Default   UTL:   0%</span>

  Load Average:  3.92  2.92  2.22                                               AVG GPU MEM: 4.7%
  CPU: 14.9%



              <span class="d">120s                           60s            30s                                             60s            30s</span>



  MEM: 15.9%
  SWP: 0.3%                                                                     AVG GPU UTL: 45.0%



  Processes:                                                                                                                   <span class="m B">jpinkney</span><span class="f B">@</span><span class="g B">rome</span>
  <span class="f B">GPU     </span>PID      USER  GPU-MEM %SM  %CPU  %MEM  TIME  COMMAND

    <span class="r">0 </span>2060184 C jpinkn+  4479MiB  89 100.3   2.1  4:00  /home/jpinkney/code/StyleNeRF/.venv/bin/python -c "from multiprocessing.spawn impo..

    <span class="r">1 </span>2060185 C jpinkn+  4479MiB  90  99.9   2.1  4:00  /home/jpinkney/code/StyleNeRF/.venv/bin/python -c "from multiprocessing.spawn impo..

    <span class="r">2 </span>2060182 C jpinkn+  5687MiB  88 100.3   1.6  4:00  /home/jpinkney/code/StyleNeRF/.venv/bin/python -c "from multiprocessing.spawn impo..
    <span class="r">2 </span>2060183 C jpinkn+  1693MiB   0 100.4   1.7  4:00  /home/jpinkney/code/StyleNeRF/.venv/bin/python -c "from multiprocessing.spawn impo..
    <span class="r">2 </span>2060184 C jpinkn+  1693MiB   0 100.3   2.1  4:00  /home/jpinkney/code/StyleNeRF/.venv/bin/python -c "from multiprocessing.spawn impo..
    <span class="r">2 </span>2060185 C jpinkn+  1693MiB   0  99.9   2.1  4:00  /home/jpinkney/code/StyleNeRF/.venv/bin/python -c "from multiprocessing.spawn impo..

    <span class="r">3 </span>2060183 C jpinkn+  4679MiB  87 100.4   1.7  4:00  /home/jpinkney/code/StyleNeRF/.venv/bin/python -c "from multiprocessing.spawn impo..


</pre>
</body></html>
